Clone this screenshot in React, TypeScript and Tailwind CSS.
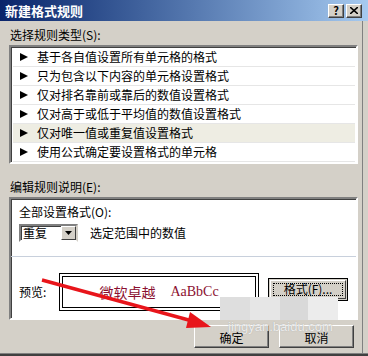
import React from "react";

const CJK = '"Noto Sans CJK SC", "Noto Sans", sans-serif';

const rows = [
  "基于各自值设置所有单元格的格式",
  "只为包含以下内容的单元格设置格式",
  "仅对排名靠前或靠后的数值设置格式",
  "仅对高于或低于平均值的数值设置格式",
  "仅对唯一值或重复值设置格式",
  "使用公式确定要设置格式的单元格",
];

function TitleBtn({ children }: { children: React.ReactNode }) {
  return (
    <div className="w-[16px] h-[14px] bg-[#D4D0C8] border border-t-white border-l-white border-r-[#404040] border-b-[#404040] shadow-[inset_-1px_-1px_0_#808080] flex items-center justify-center text-[11px] font-bold leading-none text-black">
      {children}
    </div>
  );
}

export default function App() {
  return (
    <div
      className="relative w-[368px] h-[356px] overflow-hidden bg-[#D4D0C8] flex flex-col text-black"
      style={{ fontFamily: CJK }}
    >
      {/* title bar */}
      <div className="h-[21px] shrink-0 flex items-center pl-[5px] pr-[6px] bg-gradient-to-r from-[#0A246A] to-[#A6CAF0]">
        <div className="text-white font-bold text-[13px] leading-none">新建格式规则</div>
        <div className="ml-auto flex gap-[2px]">
          <TitleBtn>?</TitleBtn>
          <TitleBtn>
            <svg width="8" height="7" viewBox="0 0 8 7">
              <path d="M0 0 L8 7 M8 0 L0 7" stroke="black" strokeWidth="1.6" />
            </svg>
          </TitleBtn>
        </div>
      </div>

      <div className="flex-1 flex">
        <div className="w-[363px] border-r border-[#808080] flex flex-col pl-[9px] pr-[5px]">
          <div className="mt-[7px] pl-[1px] text-[12px] leading-[14px]">选择规则类型(S):</div>
          {/* list */}
          <div className="mt-[3px] w-[349px] border-2 border-t-[#808080] border-l-[#808080] border-b-white border-r-white bg-white shadow-[inset_1px_1px_0_#404040]">
            <div className="pt-[1px] pl-[2px] pr-[1px]">
              {rows.map((r, i) => (
                <div
                  key={i}
                  className={
                    "h-[19px] flex items-center border-b border-[#e6e6e6] " +
                    (i === 4 ? "bg-[#EEEDE3]" : "bg-white")
                  }
                >
                  <svg className="ml-[7px]" width="8" height="8" viewBox="0 0 8 8">
                    <path d="M0 0 L8 4 L0 8 Z" fill="black" />
                  </svg>
                  <span className="ml-[9px] text-[12px] leading-none">{r}</span>
                </div>
              ))}
            </div>
          </div>

          <div className="mt-[16px] pl-[1px] text-[12px] leading-[14px]">编辑规则说明(E):</div>

          {/* edit box */}
          <div className="mt-[3px] w-[349px] h-[123px] border-2 border-t-[#808080] border-l-[#808080] border-b-white border-r-white bg-white shadow-[inset_1px_1px_0_#404040] flex flex-col">
            <div className="pl-[8px] pt-[6px] text-[12px] leading-[14px]">全部设置格式(O):</div>
            <div className="pl-[8px] mt-[5px] flex items-center">
              <div className="w-[59px] h-[18px] border-2 border-t-[#808080] border-l-[#808080] border-b-white border-r-[#D4D0C8] shadow-[inset_1px_1px_0_#404040] flex items-center bg-white">
                <span className="pl-[2px] text-[12px] leading-none">重复</span>
                <div className="ml-auto w-[15px] h-[14px] bg-[#D4D0C8] border border-t-white border-l-white border-r-[#404040] border-b-[#404040] flex items-center justify-center">
                  <svg width="7" height="4" viewBox="0 0 7 4">
                    <path d="M0 0 L7 0 L3.5 4 Z" fill="black" />
                  </svg>
                </div>
              </div>
              <span className="ml-[12px] text-[12px] leading-none">选定范围中的数值</span>
            </div>
            <div className="mt-[14px] h-[1px] bg-[#c8d0dc]" />
            <div className="flex items-center pl-[8px] pr-[8px] mt-[16px]">
              <span className="text-[12px] leading-none w-[40px]">预览:</span>
              <div className="w-[200px] h-[38px] border border-black p-[2px]">
                <div className="w-full h-full border border-black flex items-center justify-center gap-[15px] text-[#8B1030]">
                  <span className="text-[14px] leading-none">微软卓越</span>
                  <span className="text-[14px] leading-none" style={{ fontFamily: '"Liberation Serif", serif' }}>AaBbCc</span>
                </div>
              </div>
              <div className="ml-auto mb-[6px] w-[80px] h-[23px] border border-black bg-[#D4D0C8] p-[1px]">
                <div className="w-full h-full border border-t-white border-l-white border-r-[#404040] border-b-[#404040] p-[2px]">
                  <div className="w-full h-full border border-dotted border-black flex items-center justify-center text-[12px] leading-none">格式(F)...</div>
                </div>
              </div>
            </div>
          </div>

          {/* buttons */}
          <div className="mt-[5px] flex justify-end gap-[10px] pr-[3px]">
            {["确定", "取消"].map((t) => (
              <div
                key={t}
                className="w-[75px] h-[23px] border border-t-white border-l-white border-r-[#404040] border-b-[#404040] shadow-[inset_-1px_-1px_0_#808080] flex items-end justify-center pb-[3px] text-[12px] leading-none"
              >
                {t}
              </div>
            ))}
          </div>
        </div>
        <div className="flex-1" />
      </div>
      <div className="h-[1px] bg-[#808080] shrink-0" />
      <div className="h-[2px] bg-[#404040] shrink-0" />

      {/* watermark */}
      <div className="absolute left-[220px] top-[297px] w-[118px] h-[23px] flex">
        <div className="w-[30px] bg-[#dedede]" />
        <div className="w-[30px] bg-[#e6e6e6]" />
        <div className="w-[28px] bg-[#d9d9d9]" />
        <div className="w-[30px] bg-[#ececec]" />
      </div>
      <div
        className="absolute left-[228px] top-[320px] text-[13px] leading-none text-white/80"
        style={{ fontFamily: '"Liberation Sans", sans-serif', textShadow: "0 0 1px #999" }}
      >
        jingyan.baidu.com
      </div>

      {/* red arrow */}
      <svg className="absolute left-0 top-0" width="368" height="356" viewBox="0 0 368 356">
        <line x1="42" y1="280" x2="196" y2="322" stroke="#E8151B" strokeWidth="3.5" />
        <path d="M211 327 L190 312 L186 328 Z" fill="#E8151B" />
      </svg>
    </div>
  );
}
